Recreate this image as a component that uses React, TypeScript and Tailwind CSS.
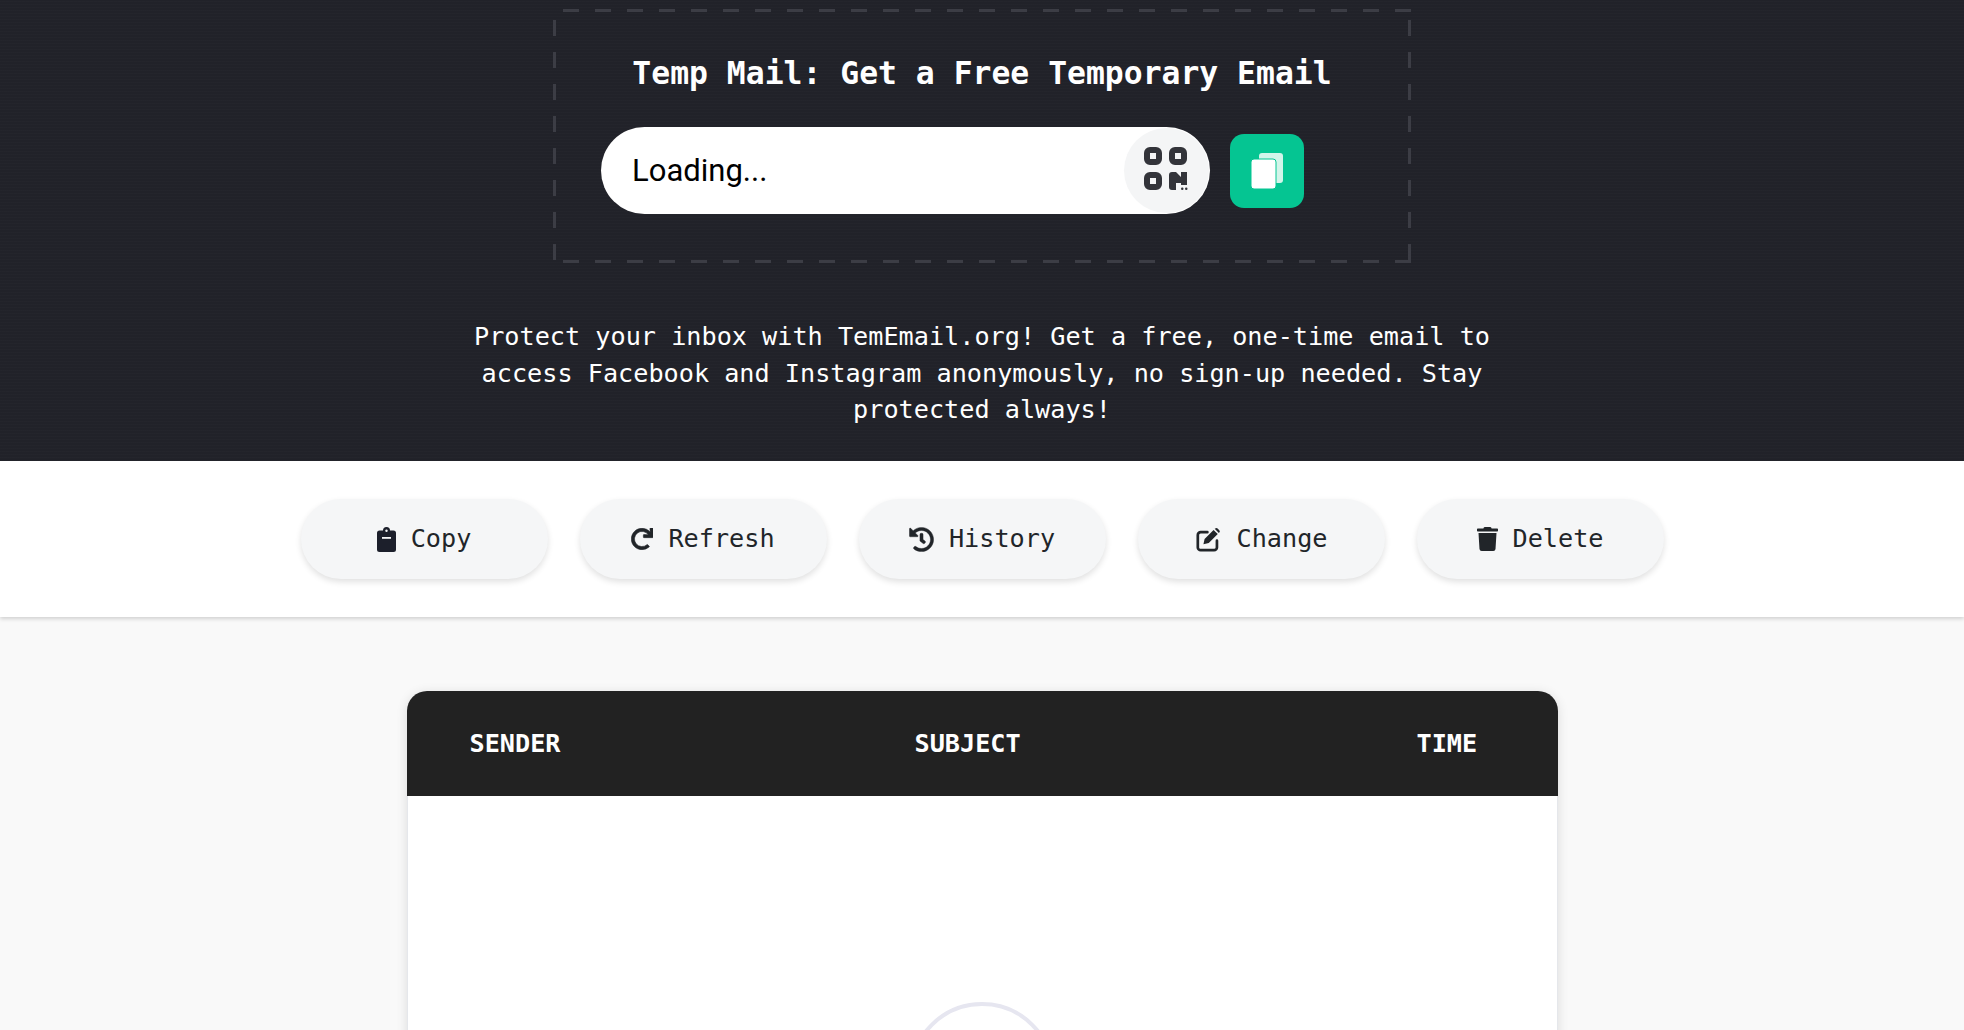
import React from 'react';
import { FaRedo, FaHistory, FaTrash } from 'react-icons/fa';

const mono = "font-['DejaVu_Sans_Mono','Liberation_Mono',monospace]";

const ClipboardIcon = () => (
  <svg viewBox="0 0 19 25" className="h-[25px] w-[19px]">
    <path
      d="M6 3.5a3.5 3.5 0 0 1 7 0h3.5A2.5 2.5 0 0 1 19 6v16.500a2.500 2.500 0 0 1-2.500 2.500h-14A2.500 2.500 0 0 1 0 22.500V6a2.500 2.500 0 0 1 2.500-2.500z"
      fill="#1c1f2b"
    />
    <circle cx="9.500" cy="3.800" r="1.200" fill="#f5f6f7" />
    <rect x="5" y="10" width="9" height="1.800" fill="#f5f6f7" />
  </svg>
);

const EditIcon = () => (
  <svg viewBox="0 0 24 24" className="h-[27px] w-[27px]" fill="#212529">
    <path
      d="M11 5.500H5A2.500 2.500 0 0 0 2.500 8v11A2.500 2.500 0 0 0 5 21.500h12a2.500 2.500 0 0 0 2.500-2.500v-6"
      fill="none"
      stroke="#212529"
      strokeWidth="2.400"
      strokeLinecap="round"
    />
    <path d="M8.500 11.500 16.500 3.500l3.700 3.700-8 8-4.700 1z" />
    <path d="M18 2.200a1.500 1.500 0 0 1 2.100 0l1.500 1.500a1.500 1.500 0 0 1 0 2.100l-.4.400-3.700-3.700z" />
  </svg>
);

const actions = [
  { label: 'Copy', icon: <ClipboardIcon /> },
  { label: 'Refresh', icon: <FaRedo className="h-[22px] w-[22px]" stroke="currentColor" strokeWidth={14} /> },
  { label: 'History', icon: <FaHistory className="h-[25px] w-[25px]" stroke="currentColor" strokeWidth={8} /> },
  { label: 'Change', icon: <EditIcon /> },
  { label: 'Delete', icon: <FaTrash className="h-[24px] w-[21px]" /> },
];

const QrIcon = () => (
  <svg viewBox="0 0 44 44" className="h-[44px] w-[44px]" fill="none">
    <rect x="3" y="3" width="12" height="12" rx="3" stroke="#33343a" strokeWidth="6" />
    <rect x="28" y="3" width="12" height="12" rx="3" stroke="#33343a" strokeWidth="6" />
    <rect x="3" y="28" width="12" height="12" rx="3" stroke="#33343a" strokeWidth="6" />
    <path d="M25 28a3 3 0 0 1 3-3h4l5 5v-5h6v13h-6v-2h-5v7h-4a3 3 0 0 1-3-3z" fill="#33343a" />
    <rect x="37" y="40.500" width="2.500" height="2.500" rx="1.200" fill="#33343a" />
    <rect x="41" y="40.500" width="2.500" height="2.500" rx="1.200" fill="#33343a" />
  </svg>
);

const CopyIcon = () => (
  <svg viewBox="0 0 32 36" className="h-[36px] w-[32px]">
    <rect x="8" y="0" width="24" height="30" rx="3" fill="#d3f5ea" />
    <rect x="0" y="6" width="25" height="30" rx="3" stroke="#05c592" strokeWidth="1" fill="#ffffff" />
  </svg>
);

export default function App() {
  return (
    <div className={`h-[1030px] overflow-hidden bg-[#f9f9f9] ${mono}`}>
      <header className="flex h-[461px] flex-col items-center bg-[#212229] bg-[repeating-linear-gradient(0deg,rgba(255,255,255,0.012)_0,rgba(255,255,255,0.012)_1px,transparent_1px,transparent_3px)] pt-[9px]">
        <div className="flex h-[254px] w-[858px] flex-col items-center [background:repeating-linear-gradient(90deg,#3c3d45_0,#3c3d45_16px,transparent_16px,transparent_32px)_10px_0/100%_3px_no-repeat,repeating-linear-gradient(90deg,#3c3d45_0,#3c3d45_16px,transparent_16px,transparent_32px)_10px_100%/100%_3px_no-repeat,repeating-linear-gradient(180deg,#3c3d45_0,#3c3d45_16px,transparent_16px,transparent_32px)_0_11px/3px_100%_no-repeat,repeating-linear-gradient(180deg,#3c3d45_0,#3c3d45_16px,transparent_16px,transparent_32px)_100%_11px/3px_100%_no-repeat]">
          <h1 className="mt-[44px] text-[31.400px] leading-[40px] font-bold whitespace-nowrap text-white">
            Temp Mail: Get a Free Temporary Email
          </h1>
          <div className="mt-[34px] flex w-full items-center pl-[48px]">
            <div className="flex h-[87px] w-[609px] items-center justify-between rounded-full bg-white pr-[1px] pl-[31px]">
              <span className="pt-[2px] font-['Roboto',sans-serif] text-[31px] text-black">Loading...</span>
              <div className="flex h-[85px] w-[85px] items-center justify-center rounded-full bg-[#f4f5f6] pr-[2px] pb-[4px]">
                <QrIcon />
              </div>
            </div>
            <button className="ml-[20px] flex h-[74px] w-[74px] items-center justify-center rounded-[14px] bg-[#05c592]">
              <CopyIcon />
            </button>
          </div>
        </div>
        <p className="mt-[56px] w-[1040px] text-center text-[25.200px] leading-[36.700px] text-white">
          Protect your inbox with TemEmail.org! Get a free, one-time email to access Facebook and Instagram anonymously, no sign-up needed. Stay protected always!
        </p>
      </header>

      <nav className="relative flex h-[156px] items-center justify-center gap-[32px] bg-white shadow-[0_2px_4px_rgba(0,0,0,0.16)]">
        {actions.map((action) => (
          <button
            key={action.label}
            className="flex h-[80px] w-[247px] items-center justify-center gap-[15px] rounded-full bg-[#f5f6f7] text-[25.200px] text-[#212529] shadow-[0_3px_6px_rgba(0,0,0,0.12)]"
          >
            {action.icon}
            <span>{action.label}</span>
          </button>
        ))}
      </nav>

      <main className="flex justify-center pt-[74px]">
        <section className="h-[600px] w-[1151px] overflow-hidden rounded-t-[20px] bg-white shadow-[0_2px_12px_rgba(0,0,0,0.12)]">
          <div className="flex h-[105px] items-center bg-[#222222] pl-[63px] text-[25.200px] font-semibold text-white">
            <span className="w-[445px]">SENDER</span>
            <span className="w-[502px]">SUBJECT</span>
            <span>TIME</span>
          </div>
          <div className="flex h-[495px] justify-center border-x border-[#e5e7eb] pt-[206px]">
            <div className="h-[146px] w-[146px] rounded-full border-4 border-[#e6e6f0]" />
          </div>
        </section>
      </main>
    </div>
  );
}
